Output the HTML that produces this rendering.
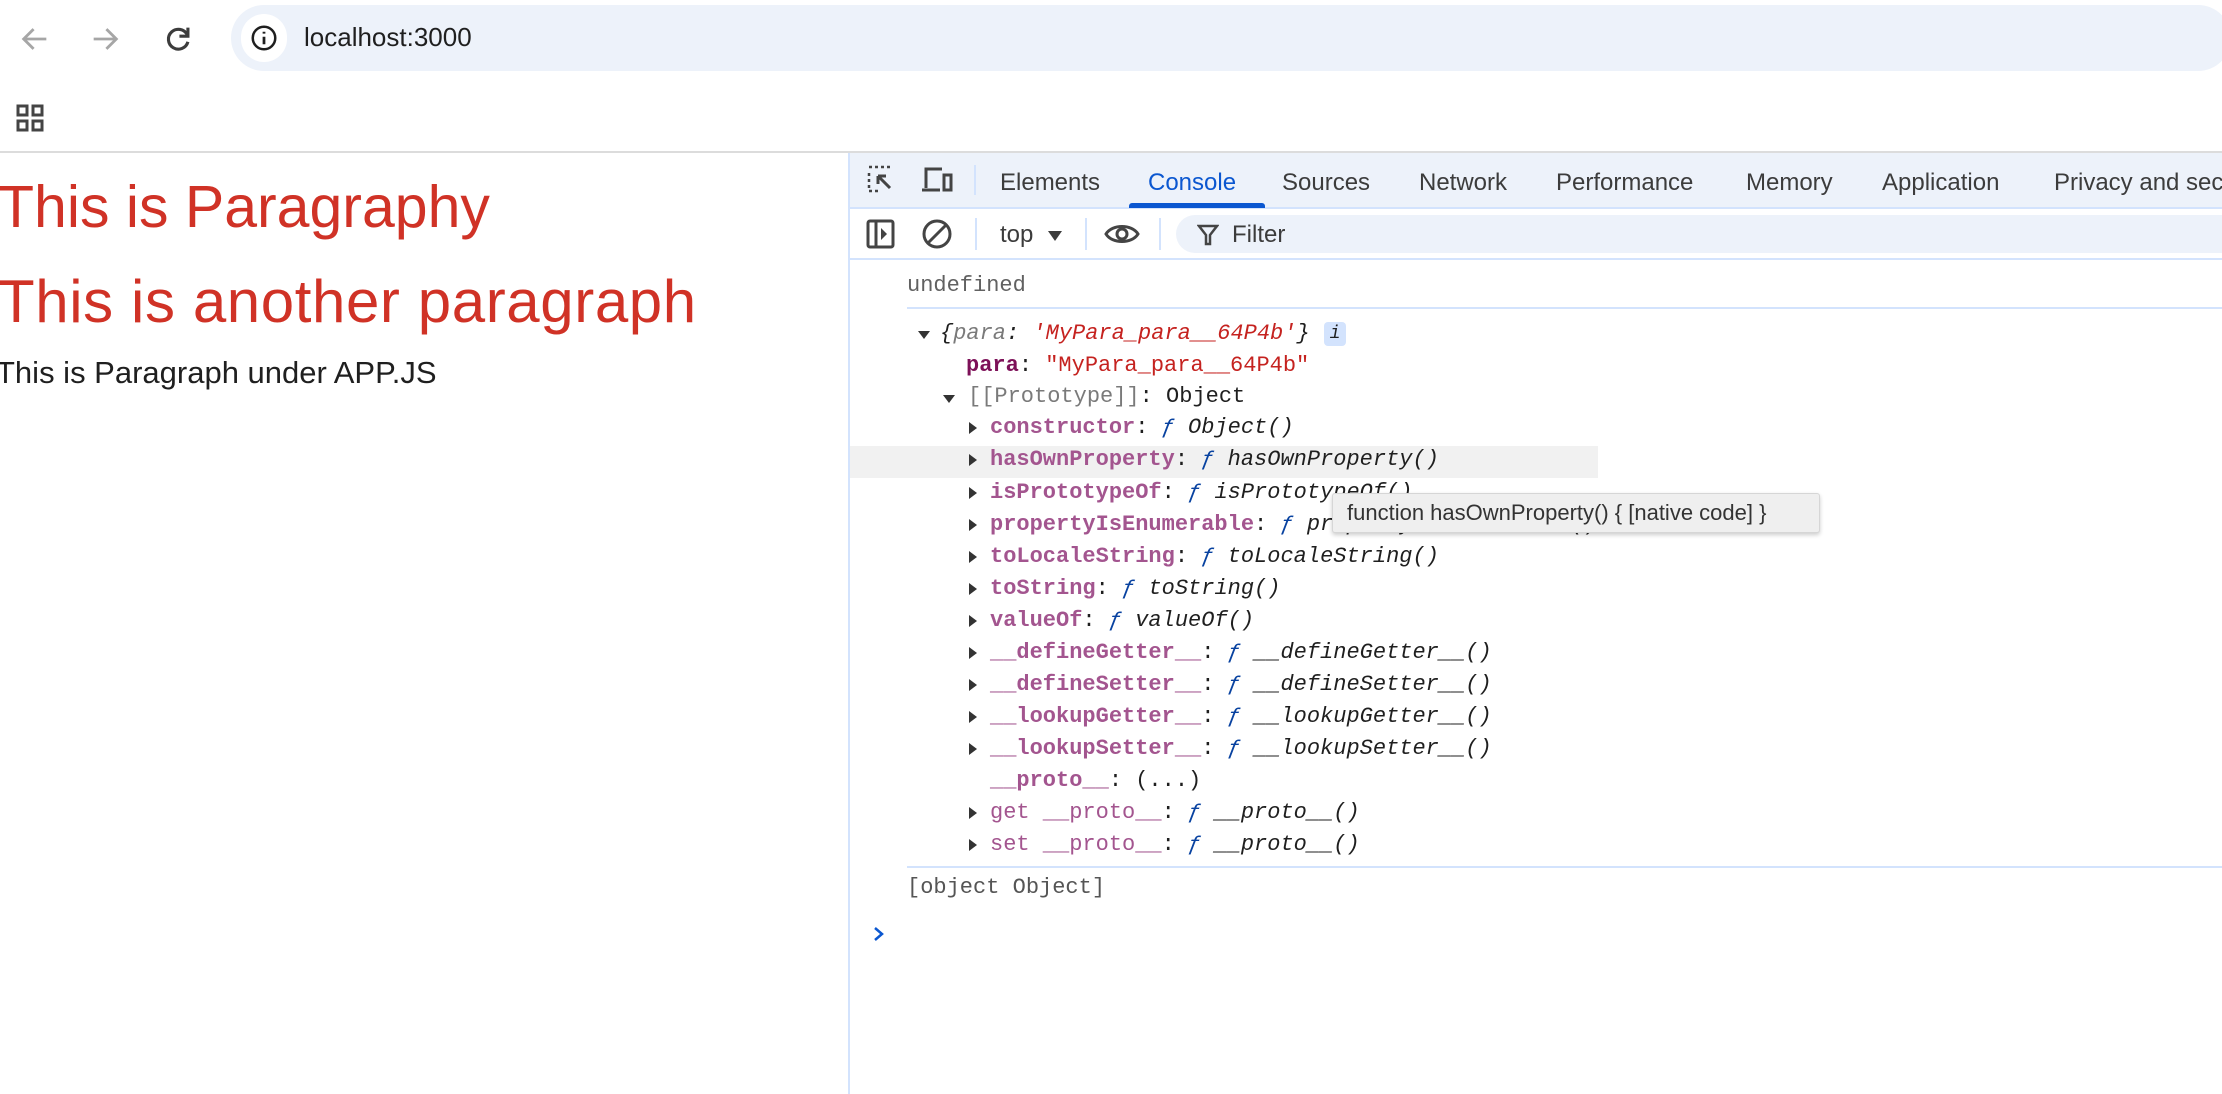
<!DOCTYPE html>
<html><head><meta charset="utf-8"><style>
*{margin:0;padding:0;box-sizing:border-box}
body{width:2222px;height:1094px;overflow:hidden;background:#fff;font-family:"Liberation Sans",sans-serif;position:relative}
.a{position:absolute;white-space:pre}
.m{font-family:"Liberation Mono",monospace;font-size:22px;line-height:32px;color:#1f1f1f}
.k{color:#a3558f;font-weight:bold}
.ok{color:#7d1058;font-weight:bold}
.s{color:#c5221f}
.f{color:#0842a0;font-style:italic}
.it{font-style:italic}
.g{color:#7a7a7a}
.tri{position:absolute;width:0;height:0}
.tr{border-top:6px solid transparent;border-bottom:6px solid transparent;border-left:8px solid #333}
.td{border-left:6px solid transparent;border-right:6px solid transparent;border-top:8px solid #333}
.tab{position:absolute;top:169px;font-size:24px;color:#3c3c3c;white-space:nowrap}
</style></head><body>
<svg class="a" style="left:18px;top:22px" width="34" height="34" viewBox="0 0 24 24"><path d="M20 12H5M11 5l-7 7 7 7" fill="none" stroke="#a6a6a6" stroke-width="2"/></svg>
<svg class="a" style="left:88px;top:22px" width="34" height="34" viewBox="0 0 24 24"><path d="M4 12h15M13 5l7 7-7 7" fill="none" stroke="#a6a6a6" stroke-width="2"/></svg>
<svg class="a" style="left:161px;top:22px" width="34" height="34" viewBox="0 0 24 24"><path d="M18.5 9A7 7 0 1 0 19 14" fill="none" stroke="#3c3c3c" stroke-width="2.2"/><path d="M19 4v6h-6" fill="none" stroke="#3c3c3c" stroke-width="2.2"/></svg>
<div class="a" style="left:231px;top:5px;width:2000px;height:66px;background:#edf2fa;border-radius:33px"></div>
<div class="a" style="left:241px;top:14px;width:46px;height:48px;background:#fff;border-radius:24px"></div>
<svg class="a" style="left:249px;top:23px" width="30" height="30" viewBox="0 0 24 24"><circle cx="12" cy="12" r="9" fill="none" stroke="#1f1f1f" stroke-width="2"/><path d="M12 11v6M12 7v1.5" stroke="#1f1f1f" stroke-width="2.2"/></svg>
<div class="a" style="left:304px;top:22px;font-size:26px;color:#1f1f1f">localhost:3000</div>
<svg class="a" style="left:15px;top:103px" width="30" height="30" viewBox="0 0 30 30"><g fill="none" stroke="#444" stroke-width="3"><rect x="3" y="3" width="9" height="9"/><rect x="18" y="3" width="9" height="9"/><rect x="3" y="18" width="9" height="9"/><rect x="18" y="18" width="9" height="9"/></g></svg>
<div class="a" style="left:0;top:151px;width:2222px;height:2px;background:#dcdcdc"></div>
<div class="a" style="left:-2px;top:173px;font-size:59px;color:#d03226">This is Paragraphy</div>
<div class="a" style="left:-2px;top:267px;font-size:60px;color:#d03226;letter-spacing:0.6px">This is another paragraph</div>
<div class="a" style="left:-4px;top:355px;font-size:31px;color:#1f1f1f">This is Paragraph under APP.JS</div>
<div class="a" style="left:848px;top:153px;width:2px;height:941px;background:#d3e3fd"></div>
<div class="a" style="left:850px;top:153px;width:1372px;height:55px;background:#edf2fa;overflow:hidden"></div>
<div class="a" style="left:850px;top:207px;width:1372px;height:2px;background:#d3e3fd"></div>
<svg class="a" style="left:866px;top:164px" width="30" height="30" viewBox="0 0 30 30"><path d="M3 3h3M9 3h3M15 3h3M21 3h3M3 9v3M3 15v3M3 21v3M3 27h3M9 27h3" stroke="#444" stroke-width="2.5"/><path d="M12 12l12 12M12 12h8M12 12v8" fill="none" stroke="#444" stroke-width="3"/></svg>
<svg class="a" style="left:920px;top:166px" width="34" height="28" viewBox="0 0 34 28"><path d="M6 22V3h16" fill="none" stroke="#444" stroke-width="3"/><path d="M2 24h18" stroke="#444" stroke-width="3"/><rect x="24" y="9" width="7" height="15" fill="none" stroke="#444" stroke-width="3"/></svg>
<div class="a" style="left:974px;top:165px;width:2px;height:30px;background:#d3e3fd"></div>
<div class="tab" style="left:1000px">Elements</div>
<div class="tab" style="left:1148px;color:#0b57d0">Console</div>
<div class="a" style="left:1129px;top:203px;width:136px;height:5px;background:#0b57d0;border-radius:3px 3px 0 0"></div>
<div class="tab" style="left:1282px">Sources</div>
<div class="tab" style="left:1419px">Network</div>
<div class="tab" style="left:1556px">Performance</div>
<div class="tab" style="left:1746px">Memory</div>
<div class="tab" style="left:1882px">Application</div>
<div class="tab" style="left:2054px">Privacy and security</div>
<svg class="a" style="left:866px;top:219px" width="30" height="30" viewBox="0 0 30 30"><rect x="2" y="2" width="25" height="26" rx="2" fill="none" stroke="#444" stroke-width="3"/><path d="M10 2v26" stroke="#444" stroke-width="3"/><path d="M15 9l6 6-6 6z" fill="#444"/></svg>
<svg class="a" style="left:921px;top:218px" width="32" height="32" viewBox="0 0 32 32"><circle cx="16" cy="16" r="13" fill="none" stroke="#444" stroke-width="3"/><path d="M7 25L25 7" stroke="#444" stroke-width="3"/></svg>
<div class="a" style="left:975px;top:218px;width:2px;height:32px;background:#d3e3fd"></div>
<div class="a" style="left:1000px;top:221px;font-size:24px;color:#3c3c3c">top</div>
<div class="tri td" style="left:1048px;top:231px;border-top-color:#3c3c3c;border-left-width:7px;border-right-width:7px;border-top-width:10px"></div>
<div class="a" style="left:1085px;top:218px;width:2px;height:32px;background:#d3e3fd"></div>
<svg class="a" style="left:1104px;top:221px" width="36" height="26" viewBox="0 0 36 26"><path d="M2 13C8 3 28 3 34 13C28 23 8 23 2 13z" fill="none" stroke="#444" stroke-width="3"/><circle cx="18" cy="13" r="5" fill="none" stroke="#444" stroke-width="3"/></svg>
<div class="a" style="left:1159px;top:218px;width:2px;height:32px;background:#d3e3fd"></div>
<div class="a" style="left:1176px;top:215px;width:1100px;height:38px;background:#edf2fa;border-radius:19px"></div>
<svg class="a" style="left:1197px;top:223px" width="22" height="24" viewBox="0 0 22 24"><path d="M2 3h18l-7 9v9h-4v-9z" fill="none" stroke="#444" stroke-width="2.5"/></svg>
<div class="a" style="left:1232px;top:221px;font-size:24px;color:#3c3c3c">Filter</div>
<div class="a" style="left:850px;top:258px;width:1372px;height:2px;background:#d3e3fd"></div>
<div class="a m g" style="left:907px;top:270px;color:#616161">undefined</div>
<div class="a" style="left:907px;top:307px;width:1315px;height:2px;background:#d3e3fd"></div>
<div class="tri td" style="left:918px;top:331px"></div>
<div class="a m" style="left:940px;top:318px"><span class="it">{<span class="g">para</span>: <span class="s">'MyPara_para__64P4b'</span>}</span></div>
<div class="a" style="left:1324px;top:322px;width:22px;height:24px;background:#d3e3fd;border-radius:4px;font-family:'Liberation Mono',monospace;font-style:italic;font-size:18px;text-align:center;line-height:24px;color:#1f1f1f">i</div>
<div class="a m" style="left:966px;top:350px"><span class="ok">para</span>: <span class="s">"MyPara_para__64P4b"</span></div>
<div class="tri td" style="left:943px;top:395px"></div>
<div class="a m" style="left:968px;top:381px"><span class="g">[[Prototype]]</span>: Object</div>
<div class="a" style="left:850px;top:446px;width:748px;height:32px;background:#f1f1f1"></div>
<div class="tri tr" style="left:969px;top:422px"></div><div class="a m" style="left:990px;top:412px"><span class="k">constructor</span>: <span class="f">ƒ</span> <span class="it">Object()</span></div>
<div class="tri tr" style="left:969px;top:454px"></div><div class="a m" style="left:990px;top:444px"><span class="k">hasOwnProperty</span>: <span class="f">ƒ</span> <span class="it">hasOwnProperty()</span></div>
<div class="tri tr" style="left:969px;top:487px"></div><div class="a m" style="left:990px;top:477px"><span class="k">isPrototypeOf</span>: <span class="f">ƒ</span> <span class="it">isPrototypeOf()</span></div>
<div class="tri tr" style="left:969px;top:519px"></div><div class="a m" style="left:990px;top:509px"><span class="k">propertyIsEnumerable</span>: <span class="f">ƒ</span> <span class="it">propertyIsEnumerable()</span></div>
<div class="tri tr" style="left:969px;top:551px"></div><div class="a m" style="left:990px;top:541px"><span class="k">toLocaleString</span>: <span class="f">ƒ</span> <span class="it">toLocaleString()</span></div>
<div class="tri tr" style="left:969px;top:583px"></div><div class="a m" style="left:990px;top:573px"><span class="k">toString</span>: <span class="f">ƒ</span> <span class="it">toString()</span></div>
<div class="tri tr" style="left:969px;top:615px"></div><div class="a m" style="left:990px;top:605px"><span class="k">valueOf</span>: <span class="f">ƒ</span> <span class="it">valueOf()</span></div>
<div class="tri tr" style="left:969px;top:647px"></div><div class="a m" style="left:990px;top:637px"><span class="k">__defineGetter__</span>: <span class="f">ƒ</span> <span class="it">__defineGetter__()</span></div>
<div class="tri tr" style="left:969px;top:679px"></div><div class="a m" style="left:990px;top:669px"><span class="k">__defineSetter__</span>: <span class="f">ƒ</span> <span class="it">__defineSetter__()</span></div>
<div class="tri tr" style="left:969px;top:711px"></div><div class="a m" style="left:990px;top:701px"><span class="k">__lookupGetter__</span>: <span class="f">ƒ</span> <span class="it">__lookupGetter__()</span></div>
<div class="tri tr" style="left:969px;top:743px"></div><div class="a m" style="left:990px;top:733px"><span class="k">__lookupSetter__</span>: <span class="f">ƒ</span> <span class="it">__lookupSetter__()</span></div>
<div class="a m" style="left:990px;top:765px"><span class="k">__proto__</span>: (...)</div>
<div class="tri tr" style="left:969px;top:807px"></div><div class="a m" style="left:990px;top:797px"><span class="k" style="font-weight:normal">get __proto__</span>: <span class="f">ƒ</span> <span class="it">__proto__()</span></div>
<div class="tri tr" style="left:969px;top:839px"></div><div class="a m" style="left:990px;top:829px"><span class="k" style="font-weight:normal">set __proto__</span>: <span class="f">ƒ</span> <span class="it">__proto__()</span></div>
<div class="a" style="left:1332px;top:493px;width:488px;height:40px;background:#efefef;border:1px solid #d6d6d6;border-radius:3px;box-shadow:0 2px 4px rgba(0,0,0,.2);font-size:22px;line-height:38px;padding-left:14px;color:#333">function hasOwnProperty() { [native code] }</div>
<div class="a" style="left:907px;top:866px;width:1315px;height:2px;background:#d3e3fd"></div>
<div class="a m" style="left:907px;top:872px;color:#555">[object Object]</div>
<svg class="a" style="left:871px;top:924px" width="16" height="20" viewBox="0 0 16 20"><path d="M4 4l7 6-7 6" fill="none" stroke="#0b57d0" stroke-width="2.5"/></svg>
</body></html>
